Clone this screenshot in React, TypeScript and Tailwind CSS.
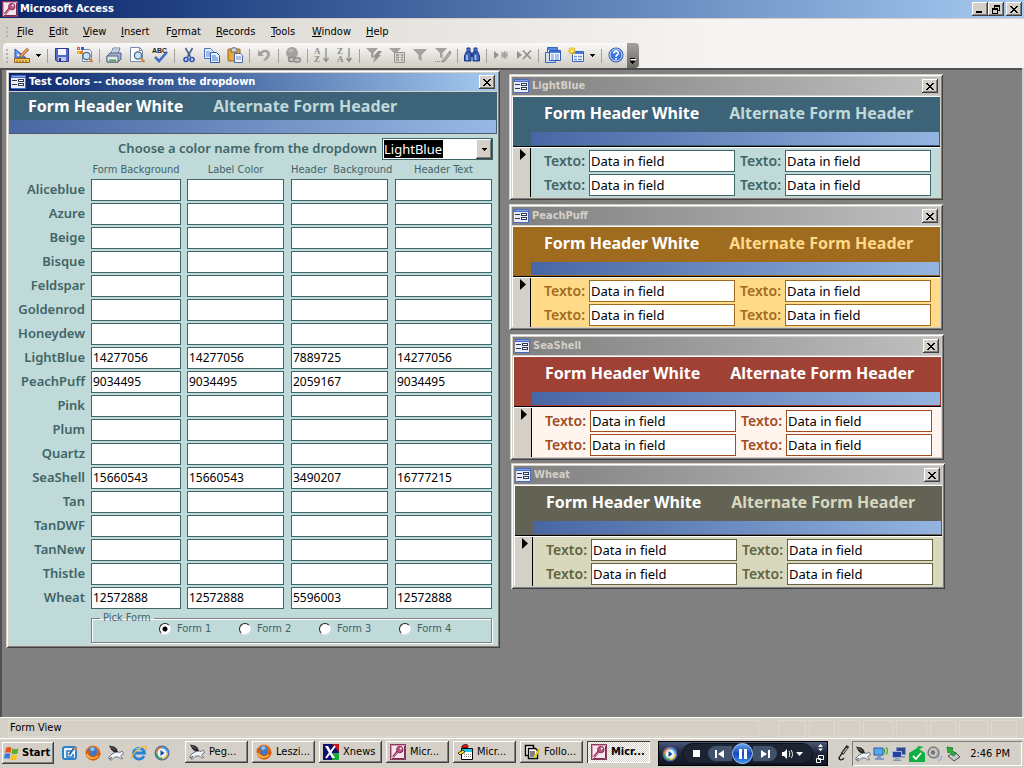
import React, { useState } from 'react';
import clsx from 'clsx';

interface IconProps {
  children: React.ReactNode;
  size?: number;
}

interface ColorRow {
  name: string;
  values: string[];
}

interface PreviewTheme {
  name: string;
  place: string;
  header: string;
  alternate: string;
  body: string;
  label: string;
  field: string;
}

const RAISED =
  'bg-[#d4d0c8] shadow-[inset_-1px_-1px_#404040,inset_1px_1px_#ffffff,inset_-2px_-2px_#808080]';
const FRAME =
  'bg-[#d4d0c8] p-[3px] shadow-[inset_1px_1px_#d4d0c8,inset_-1px_-1px_#404040,inset_2px_2px_#ffffff,inset_-2px_-2px_#808080]';

const Icon: React.FC<IconProps> = ({ children, size = 16 }) => (
  <svg width={size} height={size} viewBox="0 0 16 16" fill="none" className="shrink-0">
    {children}
  </svg>
);

/* ---------- application icons ---------- */

const KeyIcon = () => (
  <Icon>
    <rect x=".5" y=".5" width="15" height="15" fill="#f6e6ee" stroke="#8c3a5c" />
    <path d="M1.500 14.500V1.500h13" stroke="#d898b4" />
    <path d="M2 14.500h12.500V2" stroke="#7c2c50" />
    <path d="M3 13l5-6" stroke="#8c2c54" strokeWidth="2.400" />
    <path d="M3.500 13l5-6" stroke="#e0a0bc" />
    <circle cx="9.800" cy="5.600" r="3.200" fill="#b85880" stroke="#842850" />
    <circle cx="10.800" cy="4.600" r="1" fill="#fff" />
  </Icon>
);

const FormIcon = () => (
  <svg width="15" height="14" viewBox="0 0 15 14" className="shrink-0" shapeRendering="crispEdges">
    <rect width="15" height="14" fill="#4a6cc0" />
    <rect x="0" y="3" width="14" height="10" fill="#e8ecf8" />
    <rect x="1" y="1" width="13" height="1" fill="#86a4e8" />
    <path d="M1 5h5v1H1zM1 9h5v1H1zM7 4h6v3H7zM7 8h6v3H7z" fill="#303850" />
    <path d="M8 5h4v1H8zM8 9h4v1H8z" fill="#fff" />
  </svg>
);

const FirefoxIcon = () => (
  <Icon>
    <circle cx="8" cy="8" r="7.500" fill="#e8761c" />
    <circle cx="7.500" cy="6.500" r="4.800" fill="#3c78c8" />
    <path d="M5 3l3-1 2 2-2 2H6z" fill="#8cc4f0" />
    <path d="M1 4c-1 6 2 11 7 11.500 4 0 7-3 7.500-7L13 3c1 4-1 7-4 8-3 .5-5-1-5-3l3-1-3-1z" fill="#d85c10" />
    <path d="M2 9c1 4 7 6 11 2" stroke="#fac048" strokeWidth="1.500" />
  </Icon>
);

const PegasusIcon = () => (
  <Icon>
    <path d="M4 9l5-2.500 3 1 2-1.500 1.800 2.500-2 1-1 2 1.800 2-2 .5-2-2-4 0-3 3H2l2-3-3 2 0-2z" fill="#f0f4fa" stroke="#505868" strokeWidth=".8" />
    <path d="M1 .5l5 1 3 2.500.8 3.500L5.500 7 3 4.500z" fill="#282828" />
    <path d="M3 2l4 3" stroke="#a0a4ac" strokeWidth=".6" />
  </Icon>
);

const DesktopIcon = () => (
  <Icon>
    <rect x="1" y="2" width="13" height="12" rx="2" fill="#eaf4ff" stroke="#2a82c8" strokeWidth="2" />
    <path d="M10 6H5v6h6V9" stroke="#2878c0" strokeWidth="1.600" />
    <path d="M7 10l5-7" stroke="#2464a8" strokeWidth="1.800" />
    <path d="M11 2l4 1-1 4z" fill="#e07840" />
  </Icon>
);

const ExplorerIcon = () => (
  <Icon>
    <path d="M13 11a5.500 5.500 0 1 1 .5-3H4" stroke="#2484d8" strokeWidth="2.800" />
    <path d="M1 14C0 10 8 1 15 1.500c1 1 0 3-1 4" stroke="#f0b838" strokeWidth="1.300" />
    <path d="M4.500 4.500C6 3 8.500 2.500 10 3.500" stroke="#88d0ff" />
  </Icon>
);

const PlayerIcon = () => (
  <Icon>
    <circle cx="8" cy="8" r="7.500" fill="#5068a8" />
    <path d="M2.800 8A5.200 5.200 0 0 1 8 2.800" stroke="#f08030" strokeWidth="2" />
    <path d="M8 2.800A5.200 5.200 0 0 1 13.200 8" stroke="#48a8e8" strokeWidth="2" />
    <path d="M13.200 8A5.200 5.200 0 0 1 8 13.200" stroke="#e8c838" strokeWidth="2" />
    <path d="M8 13.200A5.200 5.200 0 0 1 2.800 8" stroke="#48b058" strokeWidth="2" />
    <circle cx="8" cy="8" r="4.500" fill="#eef4fc" />
    <path d="M6.500 5l4 3-4 3z" fill="#1848a0" />
  </Icon>
);

const XnewsIcon = () => (
  <Icon>
    <rect width="16" height="16" fill="#10106c" />
    <path d="M9 0h7v8z" fill="#c01818" />
    <path d="M10 9h6v7H9z" fill="#18a838" />
    <path d="M2 2h3l7 12H9z" fill="#fff" />
    <path d="M12 2L3 14" stroke="#fff" strokeWidth="2" />
  </Icon>
);

const CalendarIcon = () => (
  <Icon>
    <path d="M4.500 4.500h11v11h-11z" fill="#fff" stroke="#000" />
    <path d="M5 5h10v3H5z" fill="#18c8e8" />
    <path d="M7 10.500h7M7 12.500h7" stroke="#888" strokeDasharray="1 1" />
    <path d="M1 9l5-3 2 2-5 3z" fill="#f8e020" stroke="#000" strokeWidth=".7" />
    <path d="M5 2c2-2 6-2 6 0s-1 2-3 2-4 1-3-2z" fill="#e01818" stroke="#000" strokeWidth=".7" />
  </Icon>
);

const NotesIcon = () => (
  <Icon>
    <path d="M1.500 1.500h8v10h-8z" fill="#fff" stroke="#000" strokeWidth="1.400" />
    <path d="M4.500 4.500h7l2 2v8h-9z" fill="#fff" stroke="#000" strokeWidth="1.400" />
    <path d="M6 8h5M6 10h5M6 12h4" stroke="#000" />
    <path d="M15.500 5l-4 7-1 2" stroke="#e8c800" strokeWidth="2" />
  </Icon>
);

const WindowsLogo = () => (
  <Icon>
    <path d="M2 3c2-1.500 4-1.500 5.500 0L6.500 8C5 7 3 7 1 8z" fill="#e8501c" />
    <path d="M8.500 3.500c2 1 4 1 6 0L13.500 8.500c-2 1-4 1-6 0z" fill="#58b030" />
    <path d="M.8 9c2-1.200 4-1 5.500 0l-1 5C4 13 1 13 0 14z" fill="#3878d8" />
    <path d="M7.200 9.500c2 1 4 1 6 0l-1 5c-2 1-4 1-6 0z" fill="#f8c020" />
  </Icon>
);

/* ---------- toolbar icons ---------- */

const DesignIcon = () => (
  <Icon>
    <path d="M1 2v9h11z" fill="#6c9cf0" stroke="#2850b0" />
    <path d="M3.500 6.500v2.500h3z" fill="#fff" />
    <path d="M.5 11.500h15v4H.5z" fill="#f8c850" stroke="#98641c" />
    <path d="M3 13v2M6 13v2M9 13v2M12 13v2" stroke="#98641c" />
    <path d="M6 10l8-8" stroke="#a04c20" strokeWidth="3" />
    <path d="M6.500 9.500l7-7" stroke="#f8b060" strokeWidth="1.400" />
  </Icon>
);

const SaveIcon = () => (
  <Icon>
    <path d="M1.500 1.500h13v13H3l-1.500-1.500z" fill="#5468c8" stroke="#303c90" />
    <path d="M4 2h8v6H4z" fill="#f4f6ff" />
    <path d="M4 10h8v4H4z" fill="#b8c4ec" />
    <path d="M5 11h2v3H5z" fill="#283478" />
  </Icon>
);

const FileSearchIcon = () => (
  <Icon>
    <path d="M5.500 2.500h7l2 2v10h-9z" fill="#f0f4fc" stroke="#7888a8" />
    <path d="M.5.5h2v2h-2z" stroke="#e04020" />
    <path d="M4 0h3v3H4z" fill="#3060d0" />
    <path d="M0 4h3v3H0z" fill="#f0b820" />
    <path d="M3 4h3v3H3z" fill="#e08020" />
    <circle cx="9.500" cy="9" r="3.600" fill="#c4e4fc" stroke="#506080" strokeWidth="1.200" />
    <path d="M12 11.500l3.500 3.500" stroke="#d88030" strokeWidth="2.200" />
  </Icon>
);

const PrintIcon = () => (
  <Icon>
    <path d="M5 7l2-6h7l-2 6z" fill="#fff" stroke="#6880a8" />
    <path d="M1 9l3-3h11v6l-3 3H1z" fill="#a4b2cc" stroke="#485878" />
    <path d="M1 9h11v6H1z" fill="#e0e6f0" stroke="#586880" />
    <path d="M3 12.500h7v2H3z" fill="#58a850" />
    <path d="M7.500 3h5M7 5h5" stroke="#7890b8" />
  </Icon>
);

const PreviewIcon = () => (
  <Icon>
    <path d="M1.500.5h9l3 3v11h-12z" fill="#fff" stroke="#7888a8" />
    <path d="M10.500.5v3h3" stroke="#7888a8" />
    <circle cx="9" cy="8.500" r="3.600" fill="#c4e4fc" stroke="#506080" strokeWidth="1.200" />
    <path d="M12 11.500l3.500 3.500" stroke="#d88030" strokeWidth="2.200" />
  </Icon>
);

const SpellIcon = () => (
  <svg width="18" height="17" viewBox="0 0 18 17" fill="none" className="shrink-0">
    <text x="1" y="6" fontSize="7" fontWeight="700" fontFamily="Liberation Sans, sans-serif" fill="#202020">
      ABC
    </text>
    <path d="M4 10l4 4 8-9" stroke="#3c6cc8" strokeWidth="2.600" />
  </svg>
);

const CutIcon = () => (
  <Icon>
    <path d="M4.500 1l5 9M11.500 1l-5 9" stroke="#486088" strokeWidth="1.600" />
    <circle cx="5" cy="12.500" r="2" stroke="#2850b8" strokeWidth="1.600" />
    <circle cx="11" cy="12.500" r="2" stroke="#2850b8" strokeWidth="1.600" />
  </Icon>
);

const CopyIcon = () => (
  <Icon>
    <path d="M.5 1.500h6l3 3v7h-9z" fill="#e4eefc" stroke="#4870c0" />
    <path d="M2 5h4M2 7h4M2 9h4" stroke="#5884d0" />
    <path d="M6.500 5.500h6l3 3v7h-9z" fill="#e4eefc" stroke="#3058b0" />
    <path d="M8 9h4M8 11h6M8 13h6" stroke="#4878d0" />
  </Icon>
);

const PasteIcon = () => (
  <Icon>
    <rect x="1" y="2" width="12" height="12" rx="1" fill="#e8a838" stroke="#98601c" />
    <path d="M4 3c0-3 6-3 6 0v2H4z" fill="#d4d8e0" stroke="#606470" />
    <path d="M7.500 6.500h6l2 2v7h-8z" fill="#eef2fc" stroke="#5068a0" />
    <path d="M9 10h5M9 12h5" stroke="#7890c8" />
  </Icon>
);

const UndoIcon = () => (
  <Icon>
    <path d="M2 3v6h6L6 7c2-3 6-2 5 1-.5 2-2 3-4 5l2 1c3-2 5-4 5-7 0-4-6-6-10-2z" fill="#a4a29e" />
  </Icon>
);

const LinkIcon = () => (
  <Icon>
    <circle cx="7" cy="6" r="6" fill="#a4a29e" />
    <path d="M3 5c1-3 4-4 6-3l-2 3z" fill="#bcbab4" />
    <rect x="3.500" y="10.500" width="6.500" height="4" rx="2" fill="#c8c6c0" stroke="#8c8a86" strokeWidth="1.400" />
    <rect x="9" y="11" width="6.500" height="4" rx="2" fill="#c8c6c0" stroke="#8c8a86" strokeWidth="1.400" />
  </Icon>
);

const SortIcon: React.FC<{ top: string; bottom: string }> = ({ top, bottom }) => (
  <Icon>
    <g fontSize="9" fontWeight="700" fontFamily="Liberation Serif, serif" fill="#8c8a86">
      <text x="0" y="7">
        {top}
      </text>
      <text x="0" y="15">
        {bottom}
      </text>
    </g>
    <path d="M12 1v13M9.500 11l2.500 3.500 2.500-3.500" stroke="#8c8a86" strokeWidth="1.300" />
  </Icon>
);

const FilterIcon: React.FC<{ kind?: 'selection' | 'form' | 'advanced' }> = ({ kind }) => (
  <Icon>
    <path
      d={kind ? 'M0 1h12L7.500 6v6L5 10V6z' : 'M1 2h14L9.500 8v6L6.500 12V8z'}
      fill="#a4a29e"
    />
    {kind === 'selection' && <path d="M12 4h4l-3 4h2l-8 8 2-6H7z" fill="#94928e" />}
    {kind === 'form' && (
      <>
        <path d="M5.500 5.500h10v10h-10z" fill="#d8d6d0" stroke="#94928e" />
        <path d="M7 8h3M7 10.500h3M7 13h3M12 8h2M12 10.500h2M12 13h2" stroke="#94928e" strokeWidth="1.500" />
      </>
    )}
    {kind === 'advanced' && (
      <>
        <path d="M15 4l-7 9-1 2 3-1 6-8z" fill="#b8b6b0" stroke="#8c8a86" />
        <path d="M0 14.500h7" stroke="#8c8a86" strokeDasharray="1 1" />
      </>
    )}
  </Icon>
);

const FindIcon = () => (
  <Icon>
    <path d="M3 1h3v4H3zM10 1h3v4h-3z" fill="#4878d0" stroke="#203c88" />
    <path d="M2 5h5v9H.5V9zM9 5h5l1.500 4v5H9z" fill="#3c64b8" stroke="#203c88" />
    <path d="M7 6h2v4H7z" fill="#203c88" />
    <path d="M3 8v5M11.500 8v5" stroke="#b8d0f8" strokeWidth="1.500" />
  </Icon>
);

const NewRecordIcon = () => (
  <Icon>
    <path d="M1 4l5 4-5 4z" fill="#94928e" />
    <path d="M8.500 5l6 6M14.500 5l-6 6M11.500 4v8M8 8h7" stroke="#a4a29e" strokeWidth="1.300" />
  </Icon>
);

const DeleteRecordIcon = () => (
  <Icon>
    <path d="M1 4l5 4-5 4z" fill="#94928e" />
    <path d="M7 3.500l8 8.500M15 3.500L7 12" stroke="#94928e" strokeWidth="1.800" />
  </Icon>
);

const DatabaseIcon = () => (
  <Icon>
    <path d="M2.500.5h10v9h-10z" fill="#e8f0fc" stroke="#3864b8" />
    <path d="M3 1h9v2H3z" fill="#5888e0" />
    <path d="M.5 5.500h10v10H.5z" fill="#d0e0f8" stroke="#3864b8" />
    <path d="M4.500 3.500h11v10h-11z" fill="#f4f8ff" stroke="#3058b0" />
    <path d="M5 4h10v2H5z" fill="#4878d8" />
    <path d="M6 8h3M10 8h4M6 10h3M10 10h4M6 12h3M10 12h4" stroke="#6890d8" />
  </Icon>
);

const NewObjectIcon = () => (
  <Icon>
    <path d="M4.500 4.500h11v10h-11z" fill="#f4f8ff" stroke="#3864b8" />
    <path d="M5 5h10v2H5z" fill="#4878d8" />
    <path d="M6 9.500h3M10 9.500h4M6 12.500h3M10 12.500h4" stroke="#6890d8" strokeWidth="1.400" />
    <path d="M1 1l6 6M7 1L1 7M4 0v8M0 4h8" stroke="#f0b818" strokeWidth="1.300" />
    <circle cx="4" cy="4" r="1.500" fill="#fff480" />
  </Icon>
);

const HelpIcon = () => (
  <Icon>
    <circle cx="8" cy="8" r="7" fill="#3c74e0" stroke="#284c98" />
    <circle cx="8" cy="8" r="6" stroke="#d4e4ff" />
    <path d="M5.800 6.500c0-3.200 4.700-3 4.500-.3C10.200 7.800 8 7.700 8 9.800" stroke="#fff" strokeWidth="1.700" />
    <path d="M7.200 11h1.700v1.700H7.200z" fill="#fff" />
  </Icon>
);

/* ---------- tray icons ---------- */

const WirelessIcon = () => (
  <Icon>
    <rect x="1" y="2" width="9" height="7" fill="#58a8f0" stroke="#2858a8" />
    <path d="M4 10h4v2H4zM2 12h9v2H2z" fill="#8098c8" />
    <path d="M11 3c1 1.500 1 3 0 4M13 1.500c2 2 2 5 0 7" stroke="#30a830" strokeWidth="1.200" />
  </Icon>
);

const NetworkIcon = () => (
  <Icon>
    <rect x="5.500" y="1.500" width="9" height="7" fill="#304890" stroke="#8090c0" />
    <rect x="1.500" y="5.500" width="9" height="6" fill="#2840a0" stroke="#a0b0d8" />
    <path d="M4 12h4v1H4zM2 13.500h8v1.500H2z" fill="#8890a8" />
    <path d="M10 10h4v2h-3z" fill="#9098b0" />
  </Icon>
);

const ShieldIcon = () => (
  <Icon>
    <path d="M0 7l8-5 1-2 6 1-5 2 6 4v9H0z" fill="#10b040" />
    <path d="M4 10l3 3 5-6" stroke="#fff" strokeWidth="1.800" />
  </Icon>
);

const SpeakerIcon = () => (
  <Icon>
    <circle cx="6.500" cy="6.500" r="5.500" fill="#b4b4b4" stroke="#585858" />
    <circle cx="6" cy="6.500" r="3" fill="#787878" stroke="#e8e8e8" />
    <path d="M12 9c0 2-1 3-2 4M14.500 10c0 2-1 4-3 5" stroke="#8090d8" />
  </Icon>
);

const EjectIcon = () => (
  <Icon>
    <path d="M3 10l7-4 5 5-6 4z" fill="#c4c8cc" stroke="#505458" />
    <path d="M2 1l6 1-1 2 4 4-3 2-3-4-2 1z" fill="#28b038" stroke="#107020" strokeWidth=".7" />
  </Icon>
);

const PenIcon = () => (
  <Icon>
    <path d="M11 1L6 8l-3 5c0 3 4 2 5 0" stroke="#181818" strokeWidth="1.300" />
    <path d="M12 1L6 9" stroke="#303030" strokeWidth="3" />
    <path d="M11 3L7 8" stroke="#e8e8e8" />
  </Icon>
);

/* ---------- small controls ---------- */

const CloseButton: React.FC<{ label: string }> = ({ label }) => (
  <button aria-label={label} className={clsx('flex h-[14px] w-4 items-center justify-center', RAISED)}>
    <svg width="8" height="7" viewBox="0 0 8 7" shapeRendering="crispEdges">
      <path d="M0 0h2v1h1v1h2V1h1V0h2v1H7v1H6v1H5v1h1v1h1v1h1v1H6V6H5V5H3v1H2v1H0V6h1V5h1V4h1V3H2V2H1V1H0z" />
    </svg>
  </button>
);

const ToolButton: React.FC<{ label: string; children: React.ReactNode }> = ({ label, children }) => (
  <button aria-label={label} title={label} className="flex h-full w-[23px] items-center justify-center pb-px">
    {children}
  </button>
);

const ToolSeparator = () => (
  <span className="flex w-[6px] items-center justify-center">
    <span className="h-[14px] w-px bg-[#a09e98]" />
  </span>
);

const MoreButton: React.FC<{ label: string }> = ({ label }) => (
  <button aria-label={label} className="flex h-full w-[11px] items-center justify-center">
    <svg width="5" height="3" viewBox="0 0 5 3" shapeRendering="crispEdges">
      <path d="M0 0h5v1H4v1H3v1H2V2H1V1H0z" />
    </svg>
  </button>
);

/* ---------- main window parts ---------- */

const menus = [
  { before: '', key: 'F', after: 'ile', width: 'w-8' },
  { before: '', key: 'E', after: 'dit', width: 'w-[34px]' },
  { before: '', key: 'V', after: 'iew', width: 'w-[38px]' },
  { before: '', key: 'I', after: 'nsert', width: 'w-[45px]' },
  { before: 'F', key: 'o', after: 'rmat', width: 'w-[50px]' },
  { before: '', key: 'R', after: 'ecords', width: 'w-[55px]' },
  { before: '', key: 'T', after: 'ools', width: 'w-[41px]' },
  { before: '', key: 'W', after: 'indow', width: 'w-[54px]' },
  { before: '', key: 'H', after: 'elp', width: 'w-[38px]' }
];

const MenuBar = () => (
  <nav className="flex h-6 items-center pl-[6px] pt-px">
    <span className="mr-[9px] flex flex-col gap-[2px]">
      {[0, 1, 2].map((dot) => (
        <span key={dot} className="size-[2px] bg-[#b4b2ac]" />
      ))}
    </span>
    {menus.map((menu) => (
      <button key={menu.key + menu.after} className={clsx('text-left', menu.width)}>
        {menu.before}
        <u>{menu.key}</u>
        {menu.after}
      </button>
    ))}
  </nav>
);

const Toolbar = () => (
  <div className="flex h-[25px] pl-[3px]">
    <div className="flex items-stretch rounded-l bg-linear-to-b from-[#fbfaf9] to-[#cfccc3]">
      <span className="flex w-[7px] flex-col items-center justify-center gap-[2px]">
        {[0, 1, 2, 3].map((dot) => (
          <span key={dot} className="size-[2px] bg-[#b4b2ac]" />
        ))}
      </span>
      <ToolButton label="View"><DesignIcon /></ToolButton>
      <MoreButton label="More views" />
      <ToolSeparator />
      <ToolButton label="Save"><SaveIcon /></ToolButton>
      <ToolButton label="File Search"><FileSearchIcon /></ToolButton>
      <ToolSeparator />
      <ToolButton label="Print"><PrintIcon /></ToolButton>
      <ToolButton label="Print Preview"><PreviewIcon /></ToolButton>
      <ToolButton label="Spelling"><SpellIcon /></ToolButton>
      <ToolSeparator />
      <ToolButton label="Cut"><CutIcon /></ToolButton>
      <ToolButton label="Copy"><CopyIcon /></ToolButton>
      <ToolButton label="Paste"><PasteIcon /></ToolButton>
      <ToolSeparator />
      <ToolButton label="Undo"><UndoIcon /></ToolButton>
      <ToolSeparator />
      <ToolButton label="Insert Hyperlink"><LinkIcon /></ToolButton>
      <ToolSeparator />
      <ToolButton label="Sort Ascending"><SortIcon top="A" bottom="Z" /></ToolButton>
      <ToolButton label="Sort Descending"><SortIcon top="Z" bottom="A" /></ToolButton>
      <ToolSeparator />
      <ToolButton label="Filter By Selection"><FilterIcon kind="selection" /></ToolButton>
      <ToolButton label="Filter By Form"><FilterIcon kind="form" /></ToolButton>
      <ToolButton label="Apply Filter"><FilterIcon /></ToolButton>
      <ToolButton label="Advanced Filter"><FilterIcon kind="advanced" /></ToolButton>
      <ToolSeparator />
      <ToolButton label="Find"><FindIcon /></ToolButton>
      <ToolSeparator />
      <ToolButton label="New Record"><NewRecordIcon /></ToolButton>
      <ToolButton label="Delete Record"><DeleteRecordIcon /></ToolButton>
      <ToolSeparator />
      <ToolButton label="Database Window"><DatabaseIcon /></ToolButton>
      <ToolButton label="New Object"><NewObjectIcon /></ToolButton>
      <MoreButton label="More objects" />
      <ToolSeparator />
      <ToolButton label="Help"><HelpIcon /></ToolButton>
    </div>
    <button
      aria-label="Toolbar Options"
      className="flex w-3 items-end justify-center rounded-r bg-linear-to-b from-[#a4a29e] to-[#6c6a66] pb-1"
    >
      <svg width="6" height="6" viewBox="0 0 6 6" shapeRendering="crispEdges">
        <path d="M0 0h5v1H0zM0 3h5v1H4v1H3v1H2V5H1V4H0z" fill="#000" />
        <path d="M1 1h5v1H1z" fill="#fff" />
      </svg>
    </button>
  </div>
);

const colorRows: ColorRow[] = [
  { name: 'Aliceblue', values: ['', '', '', ''] },
  { name: 'Azure', values: ['', '', '', ''] },
  { name: 'Beige', values: ['', '', '', ''] },
  { name: 'Bisque', values: ['', '', '', ''] },
  { name: 'Feldspar', values: ['', '', '', ''] },
  { name: 'Goldenrod', values: ['', '', '', ''] },
  { name: 'Honeydew', values: ['', '', '', ''] },
  { name: 'LightBlue', values: ['14277056', '14277056', '7889725', '14277056'] },
  { name: 'PeachPuff', values: ['9034495', '9034495', '2059167', '9034495'] },
  { name: 'Pink', values: ['', '', '', ''] },
  { name: 'Plum', values: ['', '', '', ''] },
  { name: 'Quartz', values: ['', '', '', ''] },
  { name: 'SeaShell', values: ['15660543', '15660543', '3490207', '16777215'] },
  { name: 'Tan', values: ['', '', '', ''] },
  { name: 'TanDWF', values: ['', '', '', ''] },
  { name: 'TanNew', values: ['', '', '', ''] },
  { name: 'Thistle', values: ['', '', '', ''] },
  { name: 'Wheat', values: ['12572888', '12572888', '5596003', '12572888'] }
];

const columns = [
  { title: 'Form Background', width: 'w-24', pad: 'pr-[6px]' },
  { title: 'Label Color', width: 'w-[104px]', pad: 'pr-[7px]' },
  { title: 'Header  Background', width: 'w-[104px]', pad: 'pr-[7px]' },
  { title: 'Header Text', width: 'w-[97px]', pad: 'pr-0' }
];

const TestColorsWindow = () => {
  const [color, setColor] = useState('LightBlue');

  return (
    <section className={clsx('absolute left-1 top-0 w-[494px]', FRAME)}>
      <div className="flex h-[18px] items-center bg-linear-to-r from-[#0a246a] to-[#a6caf0] px-[2px] text-white">
        <FormIcon />
        <h2 className="ml-[3px] flex-1 text-[11px] font-bold">Test Colors -- choose from the dropdown</h2>
        <CloseButton label="Close Test Colors" />
      </div>
      <div className="mt-px bg-[#3d6378] pb-px pr-px">
        <div className="flex h-7 items-center gap-[30px] pl-[19px] pb-px font-['Noto_Sans',sans-serif] text-[16px] leading-5 font-bold">
          <span className="text-white">Form Header White</span>
          <span className="text-[#c0d9d9]">Alternate Form Header</span>
        </div>
        <div className="h-[13px] bg-linear-to-r from-[#4866a0] to-[#98b8e4]" />
      </div>
      <div className="mt-px bg-[#c0d9d9] pb-[2px] pt-[3px] text-[#3f6566]">
        <div className="flex items-center justify-end gap-[5px] pr-1">
          <label
            htmlFor="color-name"
            className="pb-[2px] font-['Noto_Sans',sans-serif] text-[13px] leading-5 font-semibold"
          >
            Choose a color name from the dropdown
          </label>
          <div className="relative h-[22px] w-[111px] border border-[#3f6566] bg-white">
            <select
              id="color-name"
              value={color}
              onChange={(event) => setColor(event.target.value)}
              className="block h-[19px] w-full appearance-none bg-[linear-gradient(#000,#000)] bg-[length:59px_18px] bg-[position:1px_1px] bg-no-repeat pl-px font-['Noto_Sans',sans-serif] text-[13px] leading-[18px] text-white outline-none"
            >
              {colorRows.map((row) => (
                <option key={row.name} className="text-black">
                  {row.name}
                </option>
              ))}
            </select>
            <span
              className={clsx(
                'pointer-events-none absolute right-0 top-0 flex h-5 w-4 items-center justify-center',
                RAISED
              )}
            >
              <svg width="5" height="3" viewBox="0 0 5 3" shapeRendering="crispEdges">
                <path d="M0 0h5v1H4v1H3v1H2V2H1V1H0z" />
              </svg>
            </span>
          </div>
        </div>
        <table className="w-full table-fixed border-collapse">
          <thead>
            <tr className="h-[18px] text-[11px] leading-[14px]">
              <td className="w-[82px]" />
              {columns.map((column) => (
                <th
                  key={column.title}
                  scope="col"
                  className={clsx(
                    'pt-[2px] pb-0 pl-0 text-center align-middle font-normal whitespace-pre',
                    column.width,
                    column.pad
                  )}
                >
                  {column.title}
                </th>
              ))}
              <td />
            </tr>
          </thead>
          <tbody>
            {colorRows.map((row) => (
              <tr key={row.name} className="h-6">
                <th
                  scope="row"
                  className="pt-0 pr-[6px] pb-[2px] pl-0 text-right font-['Noto_Sans',sans-serif] text-[13px] leading-5 font-semibold"
                >
                  {row.name}
                </th>
                {row.values.map((value, index) => (
                  <td key={columns[index].title} className={clsx('py-0 pl-0', columns[index].pad)}>
                    <input
                      aria-label={`${row.name} ${columns[index].title}`}
                      defaultValue={value}
                      className="block h-[22px] w-full border border-[#3f6566] bg-white px-px pb-px font-['Noto_Sans',sans-serif] text-[12px] text-black outline-none"
                    />
                  </td>
                ))}
                <td />
              </tr>
            ))}
          </tbody>
        </table>
        <div className="pl-[82px] pr-[5px] pt-[3px]">
          <fieldset className="flex h-[30px] border border-[#808080] pl-[67px] text-[11px] shadow-[1px_1px_#ffffff,inset_1px_1px_#ffffff]">
            <legend className="-ml-[59px] px-[3px] leading-[10px]">Pick Form</legend>
            {['Form 1', 'Form 2', 'Form 3', 'Form 4'].map((form, index) => (
              <label key={form} className="flex h-3 w-20 items-center gap-[6px]">
                <input
                  type="radio"
                  name="pick-form"
                  defaultChecked={index === 0}
                  className="size-3 appearance-none rounded-full border border-t-[#202020] border-r-[#e8e8e8] border-b-[#e8e8e8] border-l-[#202020] bg-white checked:bg-[radial-gradient(#000_2px,#fff_3px)]"
                />
                {form}
              </label>
            ))}
          </fieldset>
        </div>
      </div>
    </section>
  );
};

const previews: PreviewTheme[] = [
  {
    name: 'LightBlue',
    place: 'left-[507px] top-1',
    header: 'bg-[#3d6378]',
    alternate: 'text-[#c0d9d9]',
    body: 'bg-[#c0d9d9]',
    label: 'text-[#3f6566]',
    field: 'border-[#3f6566]'
  },
  {
    name: 'PeachPuff',
    place: 'left-[507px] top-[134px]',
    header: 'bg-[#9f6b1f]',
    alternate: 'text-[#ffda89]',
    body: 'bg-[#ffda89]',
    label: 'text-[#9f6b1f]',
    field: 'border-[#9f6b1f]'
  },
  {
    name: 'SeaShell',
    place: 'left-[508px] top-[264px]',
    header: 'bg-[#9f4135]',
    alternate: 'text-white',
    body: 'bg-[#fff5ee]',
    label: 'text-[#a04c1c]',
    field: 'border-[#a04c1c]'
  },
  {
    name: 'Wheat',
    place: 'left-[509px] top-[393px]',
    header: 'bg-[#636355]',
    alternate: 'text-[#d8d8bf]',
    body: 'bg-[#d8d8bf]',
    label: 'text-[#636340]',
    field: 'border-[#636340]'
  }
];

const PreviewWindow: React.FC<{ theme: PreviewTheme }> = ({ theme }) => (
  <section className={clsx('absolute w-[434px]', FRAME, theme.place)}>
    <div className="flex h-[18px] items-center bg-linear-to-r from-[#808080] to-[#c0c0c0] px-[2px] text-[#d4d0c8]">
      <FormIcon />
      <h2 className="ml-[3px] flex-1 text-[11px] font-bold">{theme.name}</h2>
      <CloseButton label={`Close ${theme.name}`} />
    </div>
    <div className="mt-px border-t border-l border-white">
      <div className={clsx('h-[50px] border-b border-black pr-px', theme.header)}>
        <div className="flex h-[35px] items-center gap-[30px] pb-1 pl-[31px] font-['Noto_Sans',sans-serif] text-[16px] leading-5 font-bold">
          <span className="text-white">Form Header White</span>
          <span className={theme.alternate}>Alternate Form Header</span>
        </div>
        <div className="ml-[18px] h-[13px] bg-linear-to-r from-[#4866a4] to-[#94b4e0]" />
      </div>
      <div className="flex border-t border-white">
        <div className="w-[18px] border-r border-black bg-[#d4d0c8] pl-[7px] pt-px">
          <svg width="6" height="11" viewBox="0 0 6 11">
            <path d="M0 0l6 5.500L0 11z" />
          </svg>
        </div>
        <div className={clsx('grid flex-1 grid-cols-[204px_196px] gap-y-[2px] pb-px pt-[2px]', theme.body)}>
          {[1, 2, 3, 4].map((field) => (
            <label key={field} className="flex items-center justify-end">
              <span
                className={clsx(
                  "pr-1 pb-px font-['Noto_Sans',sans-serif] text-[14px] leading-5 font-semibold",
                  theme.label
                )}
              >
                Texto:
              </span>
              <input
                defaultValue="Data in field"
                className={clsx(
                  "h-[22px] w-[146px] border bg-white px-px pb-px font-['Noto_Sans',sans-serif] text-[13px] text-black outline-none",
                  theme.field
                )}
              />
            </label>
          ))}
        </div>
      </div>
    </div>
  </section>
);

/* ---------- status bar and taskbar ---------- */

const StatusBar = () => (
  <div className="flex h-[21px] items-center gap-[3px] border-t border-white bg-[#d4d0c8] pl-2 pr-[7px]">
    <p className="mr-4 flex h-[17px] flex-1 items-center border border-[#dedad2] pl-px">Form View</p>
    {['w-7', 'w-[26px]', 'w-[22px]', 'w-[30px]', 'w-[31px]', 'w-[26px]', 'w-[29px]', 'w-[26px]'].map(
      (width, index) => (
        <span key={index} className={clsx('h-[17px] border border-[#dedad2]', width)} />
      )
    )}
  </div>
);

const tasks = [
  { title: 'Peg...', icon: <PegasusIcon /> },
  { title: 'Leszi...', icon: <FirefoxIcon /> },
  { title: 'Xnews', icon: <XnewsIcon /> },
  { title: 'Micr...', icon: <KeyIcon /> },
  { title: 'Micr...', icon: <CalendarIcon /> },
  { title: 'Follo...', icon: <NotesIcon /> },
  { title: 'Micr...', icon: <KeyIcon />, active: true }
];

const MediaPlayer = () => (
  <div className="ml-2 flex h-[25px] w-[170px] items-center border border-black bg-linear-to-b from-[#485878] via-[#1c2438] to-[#101624] pl-[3px]">
    <PlayerIcon />
    <div className="ml-1 flex h-[21px] flex-1 items-center rounded-full border border-[#0c1018] bg-[#1c2434] pl-[10px]">
      <button aria-label="Stop" className="mr-2 size-[7px] bg-white" />
      <button aria-label="Previous" className="flex h-[15px] w-6 items-center justify-center rounded-l-full bg-[#40526c]">
        <svg width="10" height="8" viewBox="0 0 10 8" fill="#fff"><path d="M0 0h2v8H0zM9 0v8L3 4z" /></svg>
      </button>
      <button
        aria-label="Pause"
        className="flex size-[21px] items-center justify-center rounded-full border border-[#a8ccf8] bg-linear-to-b from-[#6ca4f0] via-[#1848b8] to-[#3c90f0]"
      >
        <svg width="8" height="10" viewBox="0 0 8 10" fill="#fff"><path d="M0 0h3v10H0zM5 0h3v10H5z" /></svg>
      </button>
      <button aria-label="Next" className="flex h-[15px] w-6 items-center justify-center rounded-r-full bg-[#40526c]">
        <svg width="10" height="8" viewBox="0 0 10 8" fill="#fff"><path d="M8 0h2v8H8zM1 0v8l6-4z" /></svg>
      </button>
      <button aria-label="Volume" className="ml-[5px]">
        <svg width="21" height="10" viewBox="0 0 21 10" fill="none">
          <path d="M0 3h2l3-3v10L2 7H0z" fill="#fff" />
          <path d="M7 2c1 2 1 4 0 6M9 1c2 3 2 6 0 8" stroke="#fff" />
          <path d="M14 3h7l-3.500 4z" fill="#fff" />
        </svg>
      </button>
    </div>
    <div className="flex w-[14px] flex-col items-center gap-1">
      <svg width="7" height="7" viewBox="0 0 7 7" fill="#fff"><path d="M1 3l2.500-3L6 3zM1 4.500l2.500 2.500L6 4.500z" /></svg>
      <svg width="8" height="8" viewBox="0 0 8 8" fill="none" stroke="#fff"><path d="M2.500.5h5v4h-5zM.5 3.500h4v4h-4z" /></svg>
    </div>
  </div>
);

const Taskbar = () => (
  <footer className="flex h-[30px] items-start border-t border-white bg-[#d4d0c8] px-[2px] pt-[2px]">
    <button className={clsx('mt-px flex h-[22px] w-[52px] items-center gap-[2px] pl-[2px] font-bold', RAISED)}>
      <WindowsLogo />
      Start
    </button>
    <nav className="ml-1 mr-3 flex">
      {[
        { label: 'Show Desktop', icon: <DesktopIcon /> },
        { label: 'Firefox', icon: <FirefoxIcon /> },
        { label: 'Pegasus Mail', icon: <PegasusIcon /> },
        { label: 'Internet Explorer', icon: <ExplorerIcon /> },
        { label: 'Media Player', icon: <PlayerIcon /> }
      ].map((item) => (
        <button key={item.label} aria-label={item.label} className="flex h-6 w-[23px] items-center justify-center">
          {item.icon}
        </button>
      ))}
    </nav>
    <div className="flex gap-1">
      {tasks.map((task, index) => (
        <button
          key={index}
          className={clsx(
            'flex h-[22px] w-[63px] items-center gap-1 pl-1 whitespace-nowrap',
            task.active
              ? 'bg-[repeating-conic-gradient(#ffffff_0_25%,#d4d0c8_0_50%)] bg-[length:2px_2px] font-bold shadow-[inset_1px_1px_#404040,inset_-1px_-1px_#ffffff]'
              : RAISED
          )}
        >
          {task.icon}
          {task.title}
        </button>
      ))}
    </div>
    <MediaPlayer />
    <span className="ml-2 mt-1">
      <PenIcon />
    </span>
    <div className="ml-auto flex h-[25px] w-[170px] items-center gap-[2px] pl-[3px] shadow-[inset_1px_1px_#808080,inset_-1px_-1px_#ffffff]">
      <PegasusIcon />
      <WirelessIcon />
      <NetworkIcon />
      <ShieldIcon />
      <SpeakerIcon />
      <EjectIcon />
      <time className="ml-auto pr-3 whitespace-nowrap">2:46 PM</time>
    </div>
  </footer>
);

const App: React.FC = () => {
  return (
    <div className="flex h-screen w-full flex-col overflow-hidden bg-[#d4d0c8] font-['DejaVu_Sans_Condensed','DejaVu_Sans',sans-serif] text-[11px] leading-[14px] text-black">
      <header>
        <div className="flex h-[18px] items-center bg-linear-to-r from-[#0a246a] to-[#a6caf0] px-[2px] text-white">
          <KeyIcon />
          <h1 className="ml-[2px] flex-1 font-bold">Microsoft Access</h1>
          <button aria-label="Minimize" className={clsx('flex h-[14px] w-4 items-end pb-[3px] pl-1', RAISED)}>
            <span className="h-[2px] w-[6px] bg-black" />
          </button>
          <button aria-label="Restore" className={clsx('mr-[2px] flex h-[14px] w-4 items-center justify-center', RAISED)}>
            <svg width="8" height="9" viewBox="0 0 8 9" shapeRendering="crispEdges">
              <path d="M2 0h6v6H6V5h1V2H3v1H2zM0 3h6v6H0zM1 5v3h4V5z" fillRule="evenodd" />
            </svg>
          </button>
          <CloseButton label="Close" />
        </div>
        <div className="border-t border-[#d4d0c8] bg-linear-to-r from-[#d4d0c8] to-[#f5f4f2] to-70%">
          <MenuBar />
          <Toolbar />
        </div>
      </header>
      <main className="relative mr-[2px] flex-1 overflow-hidden border-t-2 border-l-2 border-[#505050] bg-[#808080]">
        <TestColorsWindow />
        {previews.map((theme) => (
          <PreviewWindow key={theme.name} theme={theme} />
        ))}
      </main>
      <StatusBar />
      <Taskbar />
    </div>
  );
};

export default App;
